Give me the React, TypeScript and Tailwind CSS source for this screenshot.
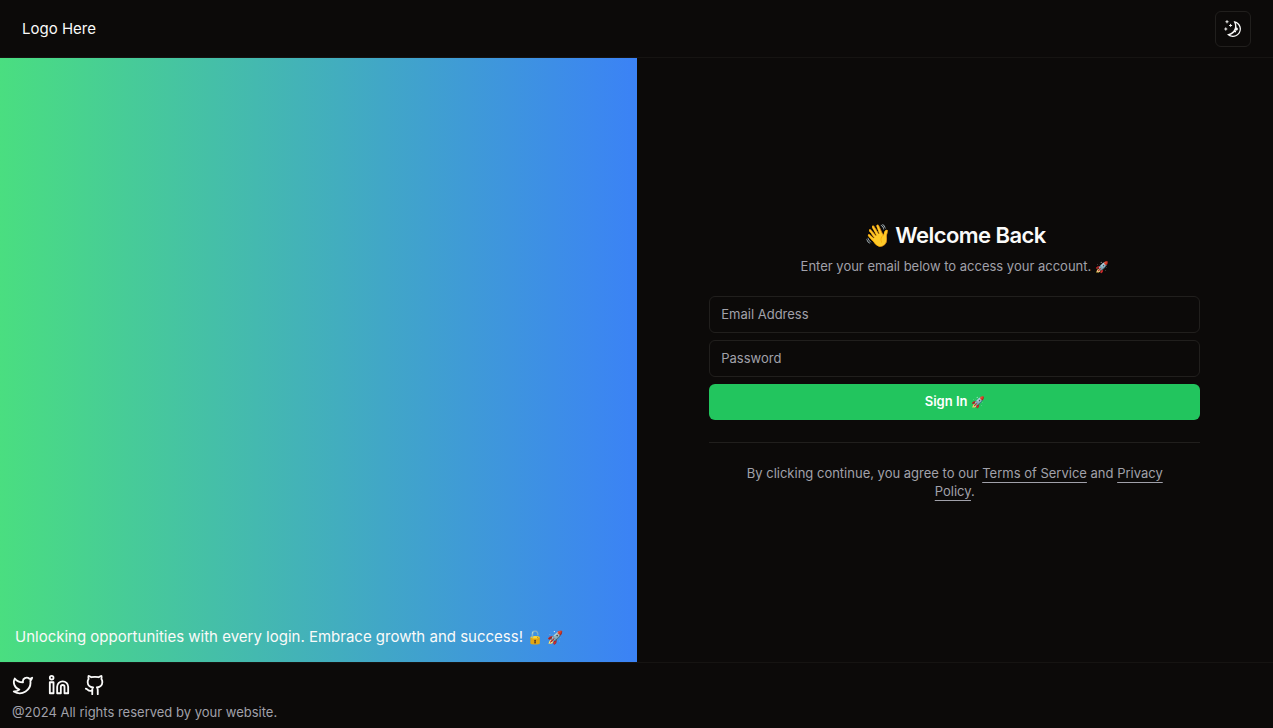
import { Github, Linkedin, Twitter } from "lucide-react";
import { RxMoon } from "react-icons/rx";

const socials = [
  { label: "Twitter", Icon: Twitter },
  { label: "LinkedIn", Icon: Linkedin },
  { label: "GitHub", Icon: Github },
];

const fieldClass =
  "h-[37px] w-full rounded-md border border-[#211f1d] bg-transparent px-[11px] text-[13px] text-stone-50 outline-none placeholder:text-[#a1a1aa] focus:border-stone-500";

const legalLinkClass = "underline underline-offset-4 hover:text-stone-50";

function Header() {
  return (
    <header className="flex h-[58px] shrink-0 items-center justify-between border-b border-[#161412] px-[22px]">
      <a href="#" className="pt-0.5 text-[15px]">
        Logo Here
      </a>
      <button
        type="button"
        aria-label="Toggle theme"
        className="flex size-9 items-center justify-center rounded-md border border-[#211f1d]"
      >
        <RxMoon className="size-[18px]" />
      </button>
    </header>
  );
}

function LoginForm() {
  return (
    <div className="w-full max-w-[491px] pb-0.5">
      <div className="flex flex-col items-center gap-[3px] text-center">
        <h1 className="text-[22px] leading-8 font-semibold tracking-tight">👋 Welcome Back</h1>
        <p className="text-[13px] leading-6 text-[#a1a1aa]">
          Enter your email below to access your account. <span className="text-[11px]">🚀</span>
        </p>
      </div>
      <form className="mt-[17px] flex flex-col gap-[7px]" onSubmit={(e) => e.preventDefault()}>
        <input type="email" aria-label="Email Address" placeholder="Email Address" className={fieldClass} />
        <input type="password" aria-label="Password" placeholder="Password" className={fieldClass} />
        <button type="submit" className="h-9 rounded-md bg-[#22c55e] text-[13px] font-semibold text-white">
          Sign In <span className="text-[11px]">🚀</span>
        </button>
      </form>
      <hr className="mt-[22px] border-[#211f1d]" />
      <p className="mt-[21px] px-8 text-center text-[13px] leading-[18px] text-[#a1a1aa]">
        By clicking continue, you agree to our{" "}
        <a href="#" className={legalLinkClass}>
          Terms of Service
        </a>{" "}
        and{" "}
        <a href="#" className={legalLinkClass}>
          Privacy Policy
        </a>
        .
      </p>
    </div>
  );
}

function Footer() {
  return (
    <footer className="shrink-0 border-t border-[#161412] px-3 pt-[11px] pb-[7px]">
      <div className="flex gap-[14px]">
        {socials.map(({ label, Icon }) => (
          <a key={label} href="#" aria-label={label}>
            <Icon className="size-[22px]" />
          </a>
        ))}
      </div>
      <p className="mt-[7px] text-[13px] leading-[18px] text-[#a1a1aa]">
        @2024 All rights reserved by your website.
      </p>
    </footer>
  );
}

export default function App() {
  return (
    <div className="flex min-h-screen flex-col bg-[#0c0a09] font-['Inter',sans-serif] text-stone-50">
      <Header />
      <main className="grid flex-1 grid-cols-2">
        <section className="flex items-end bg-linear-to-r/srgb from-[#4ade80] to-[#3b82f6] px-[15px] pb-[14px]">
          <p className="text-[15px] leading-[22px]">
            Unlocking opportunities with every login. Embrace growth and success!{" "}
            <span className="text-[13px]">🔓 🚀</span>
          </p>
        </section>
        <section className="flex items-center justify-center px-8">
          <LoginForm />
        </section>
      </main>
      <Footer />
    </div>
  );
}
